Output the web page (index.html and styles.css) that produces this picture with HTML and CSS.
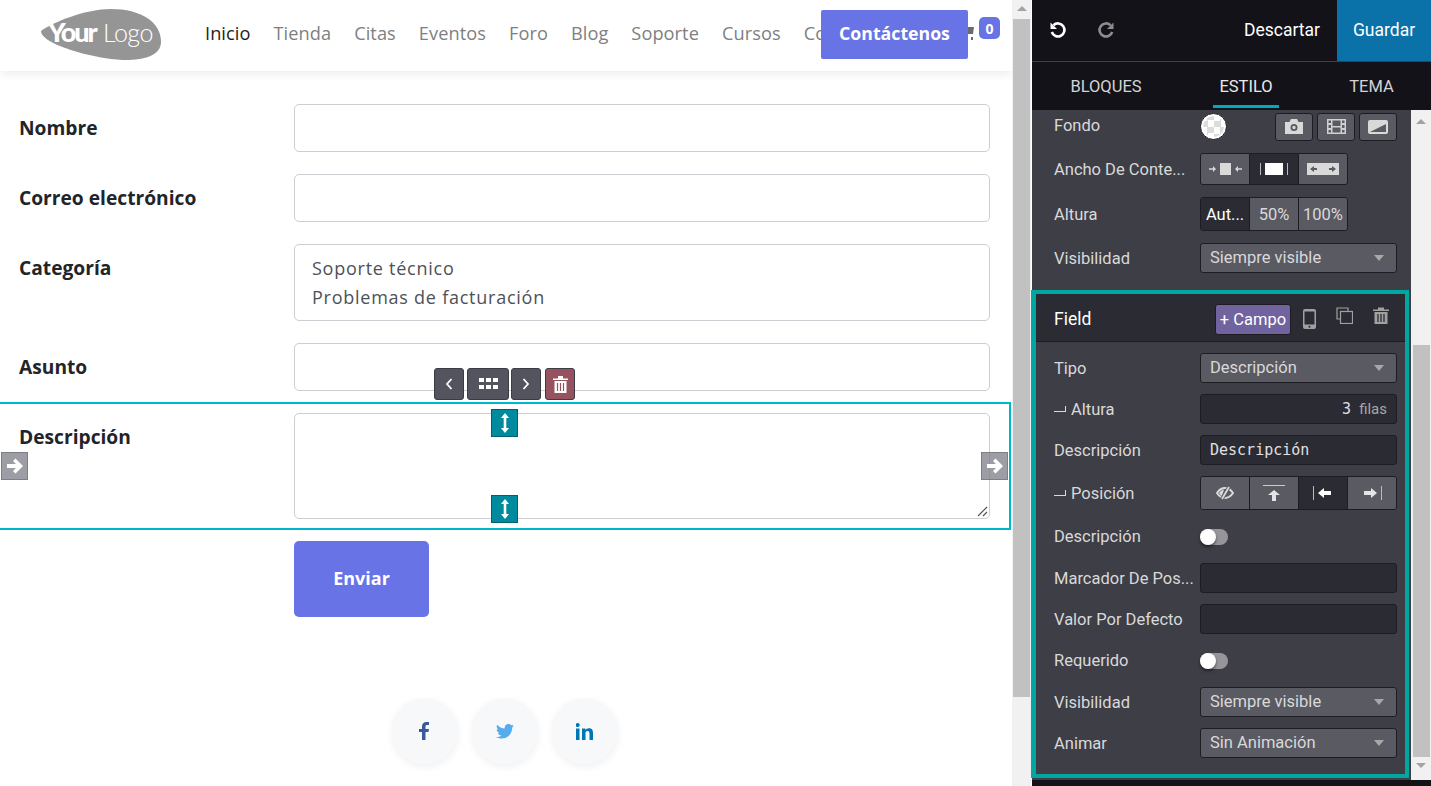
FILE: index.html
```html
<!DOCTYPE html>
<html lang="es">
<head>
  <meta charset="UTF-8">
  <title>Editor del sitio web</title>
  <link rel="stylesheet" href="styles.css">
</head>
<body>
  <div class="page">
    <header class="site-header">
      <a class="logo" href="#">
        <svg width="120" height="51" viewBox="0 0 120 51">
          <path d="M0 22C12 13 45 0 70 0C100 0 120 13 120 33C120 46 104 51 84 51C58 51 0 36 0 22Z" fill="#959595"/>
          <text x="7" y="33" class="logo-your">Your</text>
          <text x="62" y="33" class="logo-logo">Logo</text>
        </svg>
      </a>
      <nav class="site-nav">
        <a class="active" href="#">Inicio</a>
        <a href="#">Tienda</a>
        <a href="#">Citas</a>
        <a href="#">Eventos</a>
        <a href="#">Foro</a>
        <a href="#">Blog</a>
        <a href="#">Soporte</a>
        <a href="#">Cursos</a>
        <a href="#">Co</a>
      </nav>
      <svg class="cart" width="12" height="14" viewBox="0 0 12 14"><path d="M0 0h11l-1 7H2zM2 10h2v3H2zM8 10h2v3H8z" fill="#6b6b6b"/></svg>
      <a class="contact-btn" href="#">Contáctenos</a>
      <span class="cart-badge">0</span>
    </header>

    <form class="contact-form">
      <div class="form-row">
        <label>Nombre</label>
        <div class="fake-input"></div>
      </div>
      <div class="form-row">
        <label>Correo electrónico</label>
        <div class="fake-input"></div>
      </div>
      <div class="form-row">
        <label>Categoría</label>
        <div class="fake-input multi">
          <div>Soporte técnico</div>
          <div>Problemas de facturación</div>
        </div>
      </div>
      <div class="form-row">
        <label>Asunto</label>
        <div class="fake-input"></div>
      </div>
      <div class="form-row selected">
        <label>Descripción</label>
        <div class="fake-input area">
          <svg class="grip" width="12" height="12" viewBox="0 0 12 12"><path d="M2 11L11 2M7 11L11 7" stroke="#555" stroke-width="1.2"/></svg>
        </div>

        <div class="move-bar">
          <button type="button" class="move-btn"><svg width="10" height="14" viewBox="0 0 10 14"><path d="M7.5 2L3 7l4.5 5" fill="none" stroke="#fff" stroke-width="1.8"/></svg></button>
          <button type="button" class="move-btn wide"><svg width="20" height="12" viewBox="0 0 20 12"><path d="M1 0h5v4H1zM8 0h5v4H8zM15 0h5v4h-5zM1 7h5v4H1zM8 7h5v4H8zM15 7h5v4h-5z" fill="#fff"/></svg></button>
          <button type="button" class="move-btn"><svg width="10" height="14" viewBox="0 0 10 14"><path d="M2.5 2L7 7l-4.500 5" fill="none" stroke="#fff" stroke-width="1.8"/></svg></button>
          <button type="button" class="move-btn danger"><svg width="15" height="17" viewBox="0 0 15 17"><path d="M0 2.500h15V4H0zM5 0h5v3H5zM1.500 5h12v12h-12z" fill="#fff"/><path d="M4.500 7v8M7.500 7v8M10.500 7v8" stroke="#96525f" stroke-width="1.200"/></svg></button>
        </div>

        <div class="size-handle top"><svg width="10" height="20" viewBox="0 0 10 20"><path d="M5 0l4 5H6.300v10H9l-4 5-4-5h2.700V5H1z" fill="#fff"/></svg></div>
        <div class="size-handle bottom"><svg width="10" height="20" viewBox="0 0 10 20"><path d="M5 0l4 5H6.300v10H9l-4 5-4-5h2.700V5H1z" fill="#fff"/></svg></div>
        <div class="side-handle left"><svg width="18" height="16" viewBox="0 0 18 16"><path d="M1 6h9L7 3l2.500-2.500L17 8l-7.500 7.500L7 13l3-3H1z" fill="#fff"/></svg></div>
        <div class="side-handle right"><svg width="18" height="16" viewBox="0 0 18 16"><path d="M1 6h9L7 3l2.500-2.500L17 8l-7.500 7.500L7 13l3-3H1z" fill="#fff"/></svg></div>
      </div>
      <div class="form-row">
        <span></span>
        <div><button type="button" class="send-btn">Enviar</button></div>
      </div>
    </form>

    <div class="socials">
      <a class="social" href="#"><svg width="11" height="18" viewBox="0 0 11 18"><path d="M3 18V10H0V7h3V4.500C3 1.500 4.800 0 7.400 0H10v3H8.200C6.900 3 6.500 3.600 6.500 4.700V7H10l-.5 3h-3v8z" fill="#3b5998"/></svg></a>
      <a class="social" href="#"><svg width="18" height="15" viewBox="0 0 18 15"><path d="M18 1.800c-.7.300-1.400.5-2.100.6.800-.5 1.300-1.200 1.600-2-.7.400-1.500.7-2.300.9C14.500.5 13.500 0 12.400 0 10.400 0 8.700 1.700 8.700 3.700c0 .3 0 .6.100.8C5.700 4.400 3 2.900 1.200.7.900 1.200.700 1.900.700 2.600c0 1.300.7 2.400 1.600 3.100-.6 0-1.200-.2-1.700-.5v.1c0 1.800 1.300 3.300 3 3.600-.3.100-.6.100-1 .1-.2 0-.5 0-.7-.1.500 1.500 1.800 2.500 3.400 2.600-1.300 1-2.800 1.600-4.600 1.600-.3 0-.6 0-.9-.1C1.600 14 3.600 14.600 5.700 14.600c6.800 0 10.500-5.600 10.500-10.500v-.5c.7-.5 1.300-1.100 1.800-1.800z" fill="#55acee"/></svg></a>
      <a class="social" href="#"><svg width="17" height="17" viewBox="0 0 17 17"><path d="M0 5.500h3.500V17H0zM1.750 0a2 2 0 110 4 2 2 0 010-4zM6 5.500h3.400v1.600C10 6 11.300 5.200 13 5.200c3.300 0 4 2.200 4 5V17h-3.500v-6c0-1.500-.1-3-1.900-3s-2.100 1.400-2.100 2.900V17H6z" fill="#0077b5"/></svg></a>
    </div>
  </div>

  <div class="page-scrollbar">
    <span class="arrow-up"></span>
    <div class="page-thumb"></div>
  </div>

  <aside class="editor">
    <div class="editor-top">
      <button class="icon-btn"><svg width="18" height="18" viewBox="0 0 18 18"><path d="M4.500 4.200A6.500 6.500 0 112.800 11" fill="none" stroke="#fff" stroke-width="2.600"/><path d="M1.500 1.500l6.500 6.500H1.500z" fill="#fff"/></svg></button>
      <button class="icon-btn"><svg width="18" height="18" viewBox="0 0 18 18"><path d="M13.500 4.200A6.500 6.500 0 1015.200 11" fill="none" stroke="#8d8d8d" stroke-width="2.600"/><path d="M16.500 1.500L10 8h6.500z" fill="#8d8d8d"/></svg></button>
      <span class="top-spacer"></span>
      <button class="discard-btn">Descartar</button>
      <button class="save-btn">Guardar</button>
    </div>
    <div class="editor-tabs">
      <a href="#">BLOQUES</a>
      <a class="current" href="#">ESTILO</a>
      <a href="#">TEMA</a>
    </div>

    <div class="editor-body">
      <div class="editor-options">
        <section class="opts-top">
          <div class="opt-row fondo-row">
            <span class="opt-label">Fondo</span>
            <div class="bg-controls">
              <span class="color-dot"></span>
              <div class="bg-btns">
                <button class="bg-btn"><svg width="18" height="15" viewBox="0 0 18 15"><path fill-rule="evenodd" d="M0 3h4.500l1.500-3h6l1.500 3H18v12H0zM9 5a3.500 3.500 0 100 7 3.500 3.500 0 000-7zM9 6.800a1.700 1.700 0 110 3.400 1.700 1.700 0 010-3.400z" fill="#d9d9d9"/></svg></button>
                <button class="bg-btn"><svg width="19" height="15" viewBox="0 0 19 15"><path fill-rule="evenodd" d="M0 0h19v15H0zM1.500 1.500v2.500H4V1.500zM1.500 6v3H4V6zM1.500 11v2.500H4V11zM15 1.500V4h2.500V1.500zM15 6v3h2.500V6zM15 11v2.500h2.500V11zM5.500 1.500V7h8V1.500zM5.500 8.500v5h8v-5z" fill="#d0d0d0"/></svg></button>
                <button class="bg-btn"><svg width="20" height="14" viewBox="0 0 20 14"><rect width="20" height="14" rx="2" fill="#d9d9d9"/><path d="M2 12L18 4v8z" fill="#5a5a63"/></svg></button>
              </div>
            </div>
          </div>
          <div class="opt-row h32">
            <span class="opt-label">Ancho De Conte...</span>
            <div class="seg narrow">
              <button><svg width="33" height="12" viewBox="0 0 33 12"><path d="M0 5.200h4V3l3 3-3 3V6.800H0zM11 0h11v12H11zM33 5.200h-4V3l-3 3 3 3V6.800h4z" fill="#d9d9d9"/></svg></button>
              <button class="on"><svg width="28" height="12" viewBox="0 0 28 12"><path d="M5 0h18v12H5z" fill="#fff"/><path d="M.5 0v12M27.500 0v12" stroke="#bbb"/></svg></button>
              <button><svg width="32" height="12" viewBox="0 0 32 12"><rect width="32" height="12" fill="#d9d9d9"/><path d="M3 6l4-3v2h3v2H7v2zM29 6l-4-3v2h-3v2h3v2z" fill="#5a5a63"/></svg></button>
            </div>
          </div>
          <div class="opt-row h34">
            <span class="opt-label">Altura</span>
            <div class="seg narrow">
              <button class="on">Aut...</button>
              <button>50%</button>
              <button>100%</button>
            </div>
          </div>
          <div class="opt-row">
            <span class="opt-label">Visibilidad</span>
            <div class="select">Siempre visible</div>
          </div>
        </section>

        <section class="field-box">
          <div class="field-head">
            <span class="field-title">Field</span>
            <button class="add-field">+ Campo</button>
            <svg class="phone" width="13" height="20" viewBox="0 0 13 20"><path fill-rule="evenodd" d="M2 0h9a2 2 0 012 2v16a2 2 0 01-2 2H2a2 2 0 01-2-2V2a2 2 0 012-2zM1.500 2.500v13h10v-13zM6.500 16.700a1 1 0 100 2 1 1 0 000-2z" fill="#a0a0a0"/></svg>
            <svg class="copy" width="17" height="17" viewBox="0 0 17 17"><path d="M12 4V1H1v11h3" fill="none" stroke="#a0a0a0" stroke-width="1.200"/><rect x="4.500" y="4.500" width="12" height="12" fill="none" stroke="#a0a0a0" stroke-width="1.200"/></svg>
            <svg class="trash" width="16" height="17" viewBox="0 0 16 17"><path d="M0 2.500h16V4H0zM5 .5h6v2H5zM1.500 5h13v12h-13z" fill="#a0a0a0"/><path d="M5 7v8M8 7v8M11 7v8" stroke="#2b2b34" stroke-width="1.300"/></svg>
          </div>
          <div class="field-opts">
            <div class="opt-row">
              <span class="opt-label">Tipo</span>
              <div class="select">Descripción</div>
            </div>
            <div class="opt-row">
              <span class="opt-label"><span class="sub-mark"></span>Altura</span>
              <div class="text-box right"><span class="mono">3</span><span class="unit">filas</span></div>
            </div>
            <div class="opt-row">
              <span class="opt-label">Descripción</span>
              <div class="text-box mono">Descripción</div>
            </div>
            <div class="opt-row h34">
              <span class="opt-label"><span class="sub-mark"></span>Posición</span>
              <div class="seg">
                <button><svg width="18" height="14" viewBox="0 0 18 14"><path d="M1 7c2-3 5-5 8-5s6 2 8 5c-2 3-5 5-8 5s-6-2-8-5z" fill="none" stroke="#d9d9d9" stroke-width="2"/><path d="M3 7c1.500-2 3-3 5-3.500L6 10C5 9.500 4 8.500 3 7z" fill="#d9d9d9"/><path d="M13 1L6 13" stroke="#5a5a63" stroke-width="3.500"/><path d="M13 1L6 13" stroke="#d9d9d9" stroke-width="1.800"/></svg></button>
                <button><svg width="22" height="16" viewBox="0 0 22 16"><path d="M0 .5h22" stroke="#ccc"/><path d="M11 5l6 5h-4v6H9v-6H5z" fill="#e4e4e4"/></svg></button>
                <button class="on"><svg width="20" height="14" viewBox="0 0 20 14"><path d="M.5 0v14" stroke="#bbb"/><path d="M5 7l6-5v3h7v4h-7v3z" fill="#fff"/></svg></button>
                <button><svg width="20" height="14" viewBox="0 0 20 14"><path d="M19.500 0v14" stroke="#bbb"/><path d="M15 7L9 2v3H2v4h7v3z" fill="#e4e4e4"/></svg></button>
              </div>
            </div>
            <div class="opt-row toggle-row">
              <span class="opt-label">Descripción</span>
              <span class="toggle"></span>
            </div>
            <div class="opt-row">
              <span class="opt-label">Marcador De Pos...</span>
              <div class="text-box"></div>
            </div>
            <div class="opt-row">
              <span class="opt-label">Valor Por Defecto</span>
              <div class="text-box"></div>
            </div>
            <div class="opt-row toggle-row">
              <span class="opt-label">Requerido</span>
              <span class="toggle"></span>
            </div>
            <div class="opt-row">
              <span class="opt-label">Visibilidad</span>
              <div class="select">Siempre visible</div>
            </div>
            <div class="opt-row">
              <span class="opt-label">Animar</span>
              <div class="select">Sin Animación</div>
            </div>
          </div>
        </section>
      </div>
      <div class="editor-scrollbar">
        <span class="arrow-up"></span>
        <div class="editor-thumb"></div>
        <span class="arrow-down"></span>
      </div>
    </div>
  </aside>
</body>
</html>
```

FILE: styles.css
```css
* {
  box-sizing: border-box;
}
html, body {
  height: 100%;
}
body {
  margin: 0;
  display: flex;
  height: 786px;
  overflow: hidden;
  background-color: #fff;
  font-family: "Open Sans", "Noto Sans", sans-serif;
  color: #212529;
}
button {
  font-family: inherit;
  border: none;
  padding: 0;
  cursor: pointer;
}
a {
  text-decoration: none;
}

/* website preview */
.page {
  width: 1012px;
  height: 786px;
  overflow: hidden;
  flex: none;
}
.site-header {
  position: relative;
  height: 71px;
  display: flex;
  align-items: center;
  padding-left: 41px;
  background-color: #fff;
  box-shadow: 0 2px 10px rgba(0, 0, 0, 0.09);
}
.logo {
  display: flex;
  width: 164px;
  margin-top: -2px;
  flex: none;
}
.logo-your {
  font-family: "Lato", sans-serif;
  font-weight: 900;
  font-size: 27px;
  letter-spacing: -2px;
  fill: #fff;
}
.logo-logo {
  font-family: "Lato", sans-serif;
  font-weight: 300;
  font-size: 25px;
  letter-spacing: -0.5px;
  fill: #fff;
}
.site-nav {
  display: flex;
  gap: 23px;
  font-size: 18.2px;
  letter-spacing: 0.07px;
  margin-top: -6px;
  white-space: nowrap;
}
.site-nav a {
  color: #7d7f82;
}
.site-nav a.active {
  color: #1d1d22;
}
.contact-btn {
  position: absolute;
  left: 821px;
  top: 10px;
  width: 147px;
  height: 49px;
  padding-bottom: 4px;
  display: flex;
  align-items: center;
  justify-content: center;
  background-color: #6873e5;
  border-radius: 2px;
  color: #fff;
  font-size: 17.7px;
  font-weight: 700;
}
.cart {
  position: absolute;
  left: 963px;
  top: 27px;
}
.cart-badge {
  position: absolute;
  left: 979px;
  top: 17px;
  width: 21px;
  height: 22px;
  display: flex;
  align-items: center;
  justify-content: center;
  background-color: #6873e5;
  border-radius: 5px;
  color: #fff;
  font-size: 14px;
  font-weight: 700;
}

.contact-form {
  display: flex;
  flex-direction: column;
  gap: 22px;
  padding: 33px 22px 0 19px;
}
.form-row {
  display: grid;
  grid-template-columns: 275px 1fr;
}
.form-row label {
  font-size: 19.2px;
  font-weight: 700;
  color: #212529;
  padding-top: 10px;
}
.fake-input {
  height: 48px;
  border: 1px solid #ccced4;
  border-radius: 5px;
  background-color: #fff;
}
.fake-input.multi {
  height: 77px;
  padding: 9px 17px;
  font-size: 18px;
  line-height: 29px;
  letter-spacing: 0.75px;
  color: #4d5157;
}
.fake-input.area {
  height: 106px;
  position: relative;
}
.grip {
  position: absolute;
  right: 1px;
  bottom: 1px;
}
.form-row.selected {
  position: relative;
  margin: -11px -21px;
  padding: 9px 19px;
  border: 2px solid #00b5cc;
}
.send-btn {
  width: 135px;
  height: 76px;
  padding-bottom: 2px;
  background-color: #6873e5;
  border-radius: 5px;
  color: #fff;
  font-size: 18px;
  font-weight: 700;
}

/* toolbar and handles over the selected field */
.move-bar {
  position: absolute;
  left: 434px;
  top: -36px;
  display: flex;
  gap: 3px;
}
.move-btn {
  width: 30px;
  height: 32px;
  display: flex;
  align-items: center;
  justify-content: center;
  background-color: #54545f;
  border: 1px solid #3c3c44;
  border-radius: 3px;
}
.move-btn.wide {
  width: 42px;
  margin-right: -1px;
}
.move-btn.danger {
  width: 30px;
  margin-left: 1px;
  background-color: #96525f;
}
.size-handle {
  position: absolute;
  left: 491px;
  width: 27px;
  height: 28px;
  display: flex;
  align-items: center;
  justify-content: center;
  background-color: #008a9e;
  border: 1px solid #00606e;
}
.size-handle.top {
  top: 5px;
}
.size-handle.bottom {
  top: 91px;
}
.side-handle {
  position: absolute;
  top: 48px;
  width: 27px;
  height: 28px;
  display: flex;
  align-items: center;
  justify-content: center;
  background-color: rgba(124, 124, 136, 0.75);
  border: 1px solid #7f7f7f;
}
.side-handle.left {
  left: 1px;
}
.side-handle.right {
  left: 981px;
}

.socials {
  display: flex;
  justify-content: center;
  gap: 14px;
  margin-top: 81px;
  padding-right: 3px;
}
.social {
  width: 66px;
  height: 66px;
  border-radius: 50%;
  display: flex;
  align-items: center;
  justify-content: center;
  background-color: #f7f8fa;
  box-shadow: 0 3px 8px rgba(0, 0, 0, 0.06);
}

/* scrollbars */
.page-scrollbar {
  position: relative;
  flex: none;
  width: 19px;
  margin-right: 1px;
  height: 786px;
  padding: 19px 1px 0;
  background-color: #f1f1f1;
}
.page-thumb {
  height: 678px;
  background-color: #c1c1c1;
}
.arrow-up, .arrow-down {
  position: absolute;
  left: 50%;
  margin-left: -5px;
  width: 0;
  height: 0;
  border-left: 5px solid transparent;
  border-right: 5px solid transparent;
}
.arrow-up {
  top: 6px;
  border-bottom: 5px solid #a3a3a3;
}
.arrow-down {
  bottom: 12px;
  border-top: 5px solid #a3a3a3;
}

/* editor panel */
.editor {
  width: 399px;
  height: 786px;
  flex: none;
  display: flex;
  flex-direction: column;
  background-color: #131218;
  font-family: "Roboto", sans-serif;
  font-size: 16.5px;
  color: #d9d9d9;
}
.editor-top {
  height: 62px;
  display: flex;
  align-items: stretch;
  border-bottom: 1px solid #3e3e47;
  flex: none;
}
.icon-btn {
  width: 48px;
  background: none;
  display: flex;
  align-items: center;
  justify-content: center;
  padding: 0 0 2px 4px;
}
.top-spacer {
  flex: 1;
}
.discard-btn {
  width: 112px;
  padding-bottom: 2px;
  background: none;
  color: #fff;
  font-size: 17.5px;
  margin-right: -1px;
}
.save-btn {
  width: 94px;
  padding-bottom: 2px;
  background-color: #0a72a8;
  color: #fff;
  font-size: 17.5px;
}
.editor-tabs {
  height: 48px;
  flex: none;
  display: grid;
  grid-template-columns: 148px 98px 1fr;
  text-align: center;
}
.editor-tabs a {
  color: #d4d4d4;
  padding-top: 15px;
  font-size: 16.5px;
}
.editor-tabs a:last-child {
  padding-left: 34px;
}
.editor-tabs a.current {
  color: #e9e9e9;
  margin: 0 0 2px 33px;
  width: 66px;
  border-bottom: 3px solid #00a9bf;
}
.editor-body {
  flex: none;
  height: 670px;
  display: flex;
  background-color: #3e3e47;
}
.editor-options {
  width: 379px;
  flex: none;
}
.opts-top {
  display: flex;
  flex-direction: column;
  gap: 12px;
  padding: 2px 0 17px 22px;
  height: 180px;
}
.opt-row {
  display: grid;
  grid-template-columns: 146px 197px;
  align-items: center;
  height: 30px;
  white-space: nowrap;
}
.opt-row.fondo-row {
  height: 29px;
}
.fondo-row .opt-label {
  margin-top: -2px;
}
.opt-row.h32 {
  height: 32px;
}
.opt-row.h34 {
  height: 34px;
}
.opt-label {
  font-size: 16.5px;
  color: #d9d9d9;
}
.sub-mark {
  display: inline-block;
  width: 12px;
  height: 6px;
  margin-right: 5px;
  border-right: 1px solid #d9d9d9;
  border-bottom: 1px solid #d9d9d9;
  vertical-align: 3px;
}
.select {
  position: relative;
  height: 30px;
  padding-left: 9px;
  line-height: 28px;
  background-color: #5a5a63;
  border: 1px solid #1c1c22;
  border-radius: 3px;
  color: #d9d9d9;
}
.select::after {
  content: "";
  position: absolute;
  right: 12px;
  top: 11px;
  border-left: 5px solid transparent;
  border-right: 5px solid transparent;
  border-top: 6px solid #a8a8a8;
}
.text-box {
  height: 30px;
  padding: 0 9px;
  line-height: 28px;
  background-color: #2b2b34;
  border: 1px solid #1c1c22;
  border-radius: 3px;
  color: #e0e0e0;
}
.text-box.right {
  display: flex;
  justify-content: flex-end;
  gap: 8px;
}
.mono {
  font-family: "DejaVu Sans Mono", "Liberation Mono", monospace;
  font-size: 15px;
}
.unit {
  color: #a8a8a8;
  font-size: 15px;
}
.seg {
  display: flex;
  height: 100%;
  border: 1px solid #1c1c22;
  border-radius: 3px;
  overflow: hidden;
}
.seg.narrow {
  width: 148px;
}
.seg button {
  flex: 1;
  min-width: 0;
  display: flex;
  align-items: center;
  justify-content: center;
  background-color: #5a5a63;
  border-left: 1px solid #1c1c22;
  color: #d9d9d9;
  font-size: 16.5px;
}
.seg button:first-child {
  border-left: none;
}
.seg button.on {
  background-color: #2b2b34;
  color: #fff;
}
.bg-controls {
  display: flex;
  align-items: flex-start;
  justify-content: space-between;
}
.color-dot {
  width: 27px;
  height: 27px;
  border-radius: 50%;
  border: 1px solid #1c1c22;
  background-color: #fff;
  background-image: conic-gradient(#dcdcdc 25%, #fff 0 50%, #dcdcdc 0 75%, #fff 0);
  background-size: 13px 13px;
  box-shadow: inset 0 0 0 2px #fff;
}
.bg-btns {
  display: flex;
  gap: 4px;
}
.bg-btn {
  width: 38px;
  height: 28px;
  display: flex;
  align-items: center;
  justify-content: center;
  background-color: #5a5a63;
  border: 1px solid #1c1c22;
  border-radius: 3px;
}

.field-box {
  margin-left: -1px;
  width: 378px;
  height: 488px;
  border: 5px solid #00a7a2;
  border-width: 4px 4px 4px 5px;
}
.field-head {
  height: 48px;
  display: flex;
  align-items: center;
  padding: 3px 0 0 18px;
  background-color: #2b2b34;
  border-bottom: 1px solid #1c1c22;
}
.field-title {
  width: 161px;
  margin-top: -1px;
  font-size: 17.5px;
  color: #fff;
}
.add-field {
  width: 76px;
  height: 31px;
  flex: none;
  background-color: #71639e;
  border: 1px solid #1c1c22;
  border-radius: 3px;
  color: #fff;
  font-size: 16.5px;
}
.phone {
  margin-left: 12px;
}
.copy {
  margin-left: 20px;
  margin-top: -7px;
}
.trash {
  margin-left: 20px;
  margin-top: -7px;
}
.field-opts {
  display: flex;
  flex-direction: column;
  gap: 11px;
  padding: 11px 0 0 18px;
}
.toggle-row {
  height: 31px;
}
.toggle {
  position: relative;
  display: block;
  width: 28px;
  height: 16px;
  border-radius: 8px;
  background-color: #96969a;
}
.toggle::before {
  content: "";
  position: absolute;
  left: 0;
  top: 0;
  width: 16px;
  height: 16px;
  border-radius: 50%;
  background-color: #fff;
  box-shadow: 0 2px 3px rgba(0, 0, 0, 0.5);
}
.editor-scrollbar {
  position: relative;
  width: 20px;
  flex: none;
  padding-top: 235px;
  background-color: #f1f1f1;
}
.editor-scrollbar .arrow-up {
  top: 9px;
}
.editor-thumb {
  height: 412px;
  background-color: #c1c1c1;
  margin: 0 1px 0 2px;
}
```
